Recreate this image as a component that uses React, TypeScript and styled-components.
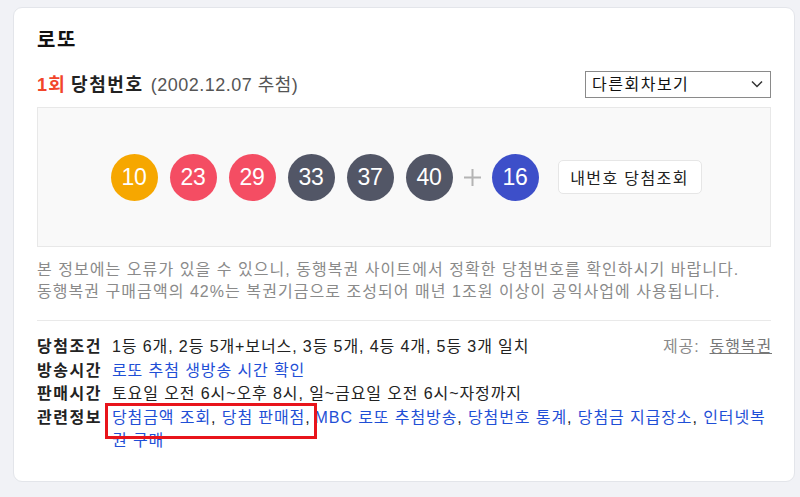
import React from "react";
import styled, { createGlobalStyle } from "styled-components";

const GlobalStyle = createGlobalStyle`
  html, body { margin: 0; padding: 0; background: #f1f2f6; }
  body {
    font-family: "Liberation Sans", Arial, "Noto Sans CJK KR", sans-serif;
    color: #222;
  }
  * { box-sizing: border-box; }
`;

const Page = styled.div`
  padding: 7px 5px 15px 13px;
  width: 800px;
`;

const Card = styled.section`
  background: #fff;
  border: 1px solid #e3e5ea;
  border-radius: 9px;
  padding: 19px 23px 28px;
  width: 782px;
`;

const Title = styled.h2`
  margin: 0;
  font-size: 20px;
  line-height: 26px;
  font-weight: 700;
  color: #111;
  letter-spacing: 1.6px;
`;

const HeaderRow = styled.div`
  display: flex;
  align-items: center;
  justify-content: space-between;
  margin-top: 18px;
  height: 27px;
`;

const Heading = styled.div`
  font-size: 18px;
  line-height: 24px;
  display: flex;
  align-items: baseline;
  gap: 7px;
`;

const Round = styled.strong`
  color: #f2452a;
  font-weight: 700;
  letter-spacing: 1.2px;
`;

const HeadStrong = styled.strong`
  color: #222;
  font-weight: 700;
  letter-spacing: 1.6px;
`;

const DateText = styled.span`
  color: #555;
  font-weight: 400;
  letter-spacing: 0.5px;
`;

const SelectWrap = styled.div`
  position: relative;
  width: 186px;
  height: 27px;
`;

const Select = styled.select`
  appearance: none;
  width: 100%;
  height: 100%;
  border: 1px solid #8a8a8a;
  border-radius: 0;
  background: #fff;
  font-family: inherit;
  font-size: 16px;
  letter-spacing: 1.5px;
  color: #111;
  padding: 0 24px 0 6px;
  outline: none;
`;

const Chevron = styled.svg`
  position: absolute;
  right: 8px;
  top: 9px;
  pointer-events: none;
`;

const BallBox = styled.div`
  margin-top: 9px;
  height: 140px;
  background: #f9f9f9;
  border: 1px solid #e8e8e8;
  display: flex;
  align-items: center;
  justify-content: center;
  gap: 12px;
  padding-left: 4px;
`;

const Ball = styled.span<{ $color: string }>`
  width: 47px;
  height: 47px;
  border-radius: 50%;
  background: ${(p) => p.$color};
  color: #fff;
  font-family: "Liberation Sans", Arial, sans-serif;
  font-size: 23px;
  display: flex;
  align-items: center;
  justify-content: center;
  letter-spacing: -0.3px;
`;

const Plus = styled.svg`
  width: 17px;
  height: 17px;
  margin: 0 -1px;
`;

const CheckButton = styled.button`
  margin-left: 7px;
  height: 34px;
  width: 144px;
  background: #fff;
  border: 1px solid #e6e6e6;
  border-radius: 5px;
  font-family: inherit;
  font-size: 16px;
  letter-spacing: 1.4px;
  color: #222;
  padding: 0;
`;

const Notice = styled.p`
  margin: 12px 0 0;
  font-size: 16px;
  line-height: 22px;
  color: #8a8a8a;
  letter-spacing: 1.05px;
`;

const Divider = styled.hr`
  margin: 17px 0 0;
  border: 0;
  border-top: 1px solid #e9e9e9;
`;

const InfoList = styled.dl`
  margin: 14px 0 0;
  display: grid;
  grid-template-columns: 75px 1fr;
  font-size: 16px;
  line-height: 23.5px;
  letter-spacing: 0.9px;
`;

const Label = styled.dt`
  font-weight: 700;
  color: #222;
  letter-spacing: 1.5px;
`;

const Value = styled.dd`
  margin: 0;
  color: #222;
`;

const SplitValue = styled(Value)`
  display: flex;
  justify-content: space-between;
`;

const Provider = styled.span`
  color: #8a8a8a;
  margin-right: -1px;
`;

const ProviderLink = styled.a`
  color: #777;
  text-decoration: underline;
  margin-left: 10px;
`;

const Link = styled.a`
  color: #1f4fd6;
  text-decoration: none;
`;

const Highlight = styled.span`
  position: relative;
  margin-right: 4px;
  &::after {
    content: "";
    position: absolute;
    left: -7px;
    right: -6px;
    top: -6px;
    bottom: -13px;
    border: 3px solid #e8141b;
    pointer-events: none;
  }
`;

const balls: { n: number; c: string }[] = [
  { n: 10, c: "#f6a700" },
  { n: 23, c: "#f44d63" },
  { n: 29, c: "#f44d63" },
  { n: 33, c: "#525666" },
  { n: 37, c: "#525666" },
  { n: 40, c: "#525666" },
];

export default function App() {
  return (
    <>
      <GlobalStyle />
      <Page>
        <Card>
          <Title>로또</Title>
          <HeaderRow>
            <Heading>
              <span>
                <Round>1회</Round> <HeadStrong>당첨번호</HeadStrong>
              </span>
              <DateText>(2002.12.07 추첨)</DateText>
            </Heading>
            <SelectWrap>
              <Select defaultValue="other">
                <option value="other">다른회차보기</option>
              </Select>
              <Chevron width="12" height="8" viewBox="0 0 12 8">
                <path d="M1 1.5l5 5 5-5" fill="none" stroke="#333" strokeWidth="1.5" />
              </Chevron>
            </SelectWrap>
          </HeaderRow>
          <BallBox>
            {balls.map((b) => (
              <Ball key={b.n} $color={b.c}>{b.n}</Ball>
            ))}
            <Plus viewBox="0 0 17 17">
              <path d="M8.5 0v17M0 8.5h17" stroke="#b4b4b4" strokeWidth="2" />
            </Plus>
            <Ball $color="#3d4fc9">16</Ball>
            <CheckButton>내번호 당첨조회</CheckButton>
          </BallBox>
          <Notice>
            본 정보에는 오류가 있을 수 있으니, 동행복권 사이트에서 정확한 당첨번호를 확인하시기 바랍니다.
            <br />
            동행복권 구매금액의 42%는 복권기금으로 조성되어 매년 1조원 이상이 공익사업에 사용됩니다.
          </Notice>
          <Divider />
          <InfoList>
            <Label>당첨조건</Label>
            <SplitValue>
              <span>1등 6개, 2등 5개+보너스, 3등 5개, 4등 4개, 5등 3개 일치</span>
              <Provider>
                제공:<ProviderLink href="#">동행복권</ProviderLink>
              </Provider>
            </SplitValue>
            <Label>방송시간</Label>
            <Value>
              <Link href="#">로또 추첨 생방송 시간 확인</Link>
            </Value>
            <Label>판매시간</Label>
            <Value>토요일 오전 6시~오후 8시, 일~금요일 오전 6시~자정까지</Value>
            <Label>관련정보</Label>
            <Value>
              <Highlight>
                <Link href="#">당첨금액 조회</Link>, <Link href="#">당첨 판매점</Link>,
              </Highlight>
              <Link href="#">MBC 로또 추첨방송</Link>, <Link href="#">당첨번호 통계</Link>,{" "}
              <Link href="#">당첨금 지급장소</Link>, <Link href="#">인터넷복권 구매</Link>
            </Value>
          </InfoList>
        </Card>
      </Page>
    </>
  );
}
